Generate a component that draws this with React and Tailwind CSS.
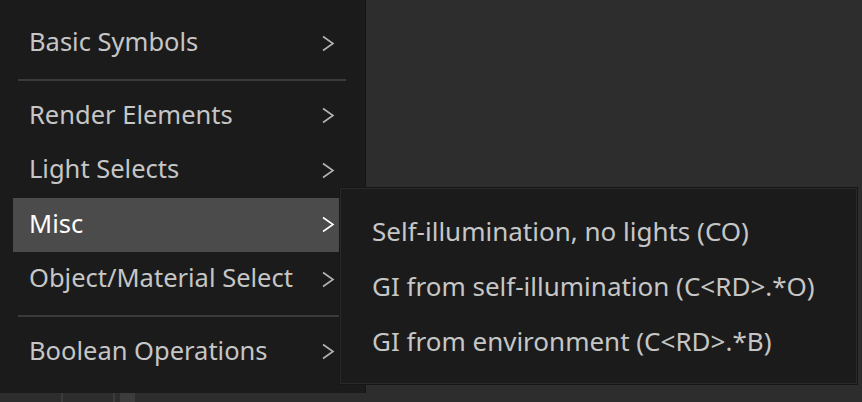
import React from "react";

const font = { fontFamily: '"Noto Sans", "Open Sans", sans-serif' };

function Chevron({ active }) {
  return (
    <svg
      width="14"
      height="17"
      viewBox="0 0 14 17"
      className={active ? "text-white" : "text-[#b4b4b4]"}
    >
      <path d="M2 1.5 L12 8.5 L2 15.5" fill="none" stroke="currentColor" strokeWidth="1.6" />
    </svg>
  );
}

function Item({ label, active }) {
  return (
    <div
      className={
        "h-[54.5px] flex items-center justify-between pl-[16px] pr-[4px] mr-[26px] " +
        (active ? "bg-[#4b4b4b] text-white" : "text-[#c6c6c6]")
      }
    >
      <span className="-mt-[3px]">{label}</span>
      <Chevron active={active} />
    </div>
  );
}

function Sep() {
  return (
    <div className="h-[18px] flex items-center pl-[5px] pr-[19px]">
      <div className="h-[2px] w-full bg-[#3a3a3a]" />
    </div>
  );
}

export default function App() {
  const sub = [
    "Self-illumination, no lights (CO)",
    "GI from self-illumination (C<RD>.*O)",
    "GI from environment (C<RD>.*B)",
  ];
  return (
    <div className="w-[862px] h-[402px] bg-[#2d2d2d] relative overflow-hidden" style={font}>
      <div className="w-[366px] h-[393px] bg-[#1b1b1b] border-r border-[#151515] pt-[16px] pl-[13px] text-[25.5px] leading-none">
        <Item label="Basic Symbols" />
        <Sep />
        <Item label="Render Elements" />
        <Item label="Light Selects" />
        <Item label="Misc" active />
        <Item label="Object/Material Select" />
        <Sep />
        <Item label="Boolean Operations" />
      </div>
      <div className="flex h-[9px]">
        <div className="w-[61px]" />
        <div className="w-[2px] bg-[#3c3c3c]" />
        <div className="w-[50px]" />
        <div className="w-[2px] bg-[#3c3c3c]" />
        <div className="w-[5px]" />
        <div className="w-[15px] bg-[#3c3c3c]" />
      </div>
      <div className="absolute left-[340px] top-[188px] w-[517px] h-[196px] bg-[#1b1b1b] border border-[#2a2a2a] shadow-[0_0_0_1px_#161616] pt-[16px] pl-[31px] text-[26px] leading-none text-[#c6c6c6]">
        {sub.map((s) => (
          <div key={s} className="h-[55px] flex items-center">
            <span className="-mt-[3px]">{s}</span>
          </div>
        ))}
      </div>
    </div>
  );
}
